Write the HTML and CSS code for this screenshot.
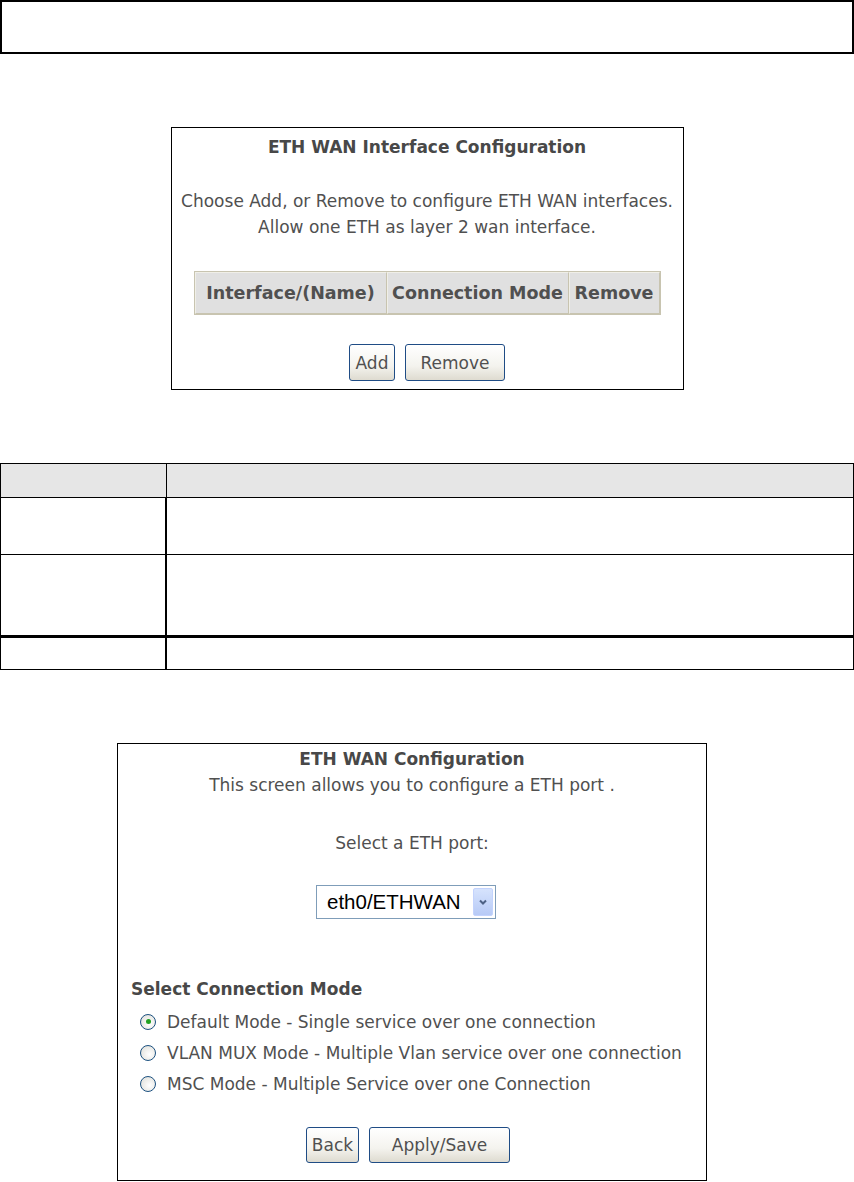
FILE: index.html
```html
<!DOCTYPE html>
<html lang="en">
<head>
    <meta charset="UTF-8">
    <title>ETH WAN Interface Configuration</title>
    <link rel="stylesheet" href="styles.css">
</head>
<body>
    <!-- Empty note box at the top of the page -->
    <div class="note-box"></div>

    <!-- Screenshot: ETH WAN interface list -->
    <div class="shot shot-list">
        <h3 class="shot-title">ETH WAN Interface Configuration</h3>
        <p class="shot-text first">Choose Add, or Remove to configure ETH WAN interfaces.</p>
        <p class="shot-text">Allow one ETH as layer 2 wan interface.</p>

        <table class="iface-table">
            <tr>
                <td class="col-iface">Interface/(Name)</td>
                <td class="col-mode">Connection Mode</td>
                <td>Remove</td>
            </tr>
        </table>

        <div class="btn-row list-btns">
            <span class="xp-btn btn-add">Add</span>
            <span class="xp-btn btn-remove">Remove</span>
        </div>
    </div>

    <!-- Description table -->
    <table class="desc-table">
        <tr class="desc-head">
            <td class="col-a"></td>
            <td class="col-b"></td>
        </tr>
        <tr class="desc-row1">
            <td class="col-a"></td>
            <td class="col-b"></td>
        </tr>
        <tr class="desc-row2">
            <td class="col-a"></td>
            <td class="col-b"></td>
        </tr>
        <tr class="desc-row3">
            <td class="col-a"></td>
            <td class="col-b"></td>
        </tr>
    </table>

    <!-- Screenshot: ETH WAN configuration -->
    <div class="shot shot-config">
        <h3 class="shot-title">ETH WAN Configuration</h3>
        <p class="shot-text">This screen allows you to configure a ETH port .</p>
        <p class="shot-text port-label">Select a ETH port:</p>

        <div class="select-wrap">
            <div class="xp-select">
                <span class="select-value">eth0/ETHWAN</span>
                <span class="select-arrow">
                    <svg viewBox="0 0 10 10" width="10" height="10">
                        <path d="M2,3.5 L5,6.5 L8,3.5" stroke="#4d6185" stroke-width="2" fill="none"/>
                    </svg>
                </span>
            </div>
        </div>

        <h4 class="mode-title">Select Connection Mode</h4>
        <div class="mode-list">
            <div class="mode-row">
                <span class="radio checked"></span>
                <span>Default Mode - Single service over one connection</span>
            </div>
            <div class="mode-row">
                <span class="radio"></span>
                <span>VLAN MUX Mode - Multiple Vlan service over one connection</span>
            </div>
            <div class="mode-row">
                <span class="radio"></span>
                <span>MSC Mode - Multiple Service over one Connection</span>
            </div>
        </div>

        <div class="btn-row config-btns">
            <span class="xp-btn btn-back">Back</span>
            <span class="xp-btn btn-apply">Apply/Save</span>
        </div>
    </div>
</body>
</html>
```

FILE: styles.css
```css
/* General Styles */
body {
    margin: 0;
    padding: 0;
    background-color: #ffffff;
    font-family: 'DejaVu Sans', 'Verdana', sans-serif;
    color: #505050;
}

/* Top note box */
.note-box {
    height: 54px;
    box-sizing: border-box;
    border: 2px solid #000000;
    margin-bottom: 73px;
}

/* Screenshot frames */
.shot {
    box-sizing: border-box;
    border: 1px solid #000000;
    background-color: #ffffff;
}

.shot-title {
    margin: 0;
    font-size: 17px;
    line-height: 26px;
    font-weight: bold;
    color: #484848;
    text-align: center;
}

.shot-text {
    margin: 0;
    font-size: 17px;
    line-height: 26px;
    text-align: center;
}

/* First screenshot */
.shot-list {
    width: 513px;
    height: 263px;
    margin: 0 auto 73px auto;
    padding-top: 6px;
}

.shot-list .first {
    margin-top: 28px;
}

.iface-table {
    margin: 31px auto 0 auto;
    width: 467px;
    height: 44px;
    border-collapse: separate;
    border-spacing: 0;
    border: 1px solid #c8c4b0;
}

.iface-table td {
    background-color: #e0e0e0;
    border: 1px solid #c8c4b0;
    border-top-color: #f0efe8;
    border-left-color: #f0efe8;
    font-weight: bold;
    font-size: 17.5px;
    color: #505050;
    padding: 0 4px;
    text-align: center;
    white-space: nowrap;
}

.iface-table .col-iface { width: 182px; }
.iface-table .col-mode { width: 172px; }

/* XP style buttons */
.btn-row {
    display: flex;
    justify-content: center;
    gap: 10px;
}

.xp-btn {
    display: flex;
    align-items: center;
    justify-content: center;
    box-sizing: border-box;
    height: 37px;
    border: 1px solid #1f4c85;
    border-radius: 3px;
    background: linear-gradient(#ffffff, #f4f3ee 60%, #dedbd0);
    font-size: 17px;
    color: #505050;
}

.list-btns {
    margin-top: 29px;
}

.btn-add { width: 46px; }
.btn-remove { width: 100px; }

/* Description table */
.desc-table {
    width: 854px;
    border-collapse: collapse;
    margin-bottom: 73px;
}

.desc-table td {
    border: 1px solid #000000;
    padding: 0;
}

.desc-table .col-a {
    width: 164px;
    border-right-width: 2px;
}

.desc-head td {
    height: 33px;
    background-color: #e6e6e6;
}

.desc-head .col-a {
    border-right-width: 1px;
}

.desc-row1 td { height: 56px; }
.desc-row2 td { height: 80px; }

.desc-row3 td {
    height: 31px;
    border-top-width: 3px;
}

/* Second screenshot */
.shot-config {
    width: 590px;
    height: 438px;
    margin-left: 117px;
    padding-top: 2px;
}

.port-label {
    margin-top: 32px;
}

.select-wrap {
    display: flex;
    justify-content: center;
    margin-top: 29px;
    padding-right: 12px;
}

.xp-select {
    display: flex;
    align-items: center;
    box-sizing: border-box;
    width: 180px;
    height: 34px;
    border: 1px solid #7f9db9;
    background-color: #ffffff;
    padding: 2px;
}

.select-value {
    flex: 1;
    font-family: 'Liberation Sans', Arial, sans-serif;
    font-size: 20.5px;
    color: #000000;
    padding-left: 8px;
}

.select-arrow {
    display: flex;
    align-items: center;
    justify-content: center;
    width: 20px;
    height: 28px;
    border-radius: 2px;
    background: linear-gradient(#d6e3fd, #b7caf6);
    border: 1px solid #c3d3fd;
    box-sizing: border-box;
}

.mode-title {
    margin: 57px 0 0 0;
    padding-left: 13px;
    font-size: 17px;
    line-height: 27px;
    font-weight: bold;
    color: #484848;
}

.mode-list {
    margin-top: 3px;
    padding-left: 22px;
}

.mode-row {
    display: flex;
    align-items: center;
    gap: 11px;
    height: 31px;
    font-size: 17px;
}

.radio {
    box-sizing: border-box;
    width: 16px;
    height: 16px;
    border: 1px solid #1c5180;
    border-radius: 50%;
    background: radial-gradient(circle at 60% 60%, #ffffff, #dcdcd6);
    position: relative;
}

.radio.checked::after {
    content: "";
    position: absolute;
    left: 4.5px;
    top: 4.5px;
    width: 5px;
    height: 5px;
    border-radius: 50%;
    background-color: #21a121;
}

.config-btns {
    margin-top: 28px;
    padding-right: 8px;
}

.config-btns .xp-btn {
    height: 36px;
}

.btn-back { width: 53px; }
.btn-apply { width: 141px; }
```
